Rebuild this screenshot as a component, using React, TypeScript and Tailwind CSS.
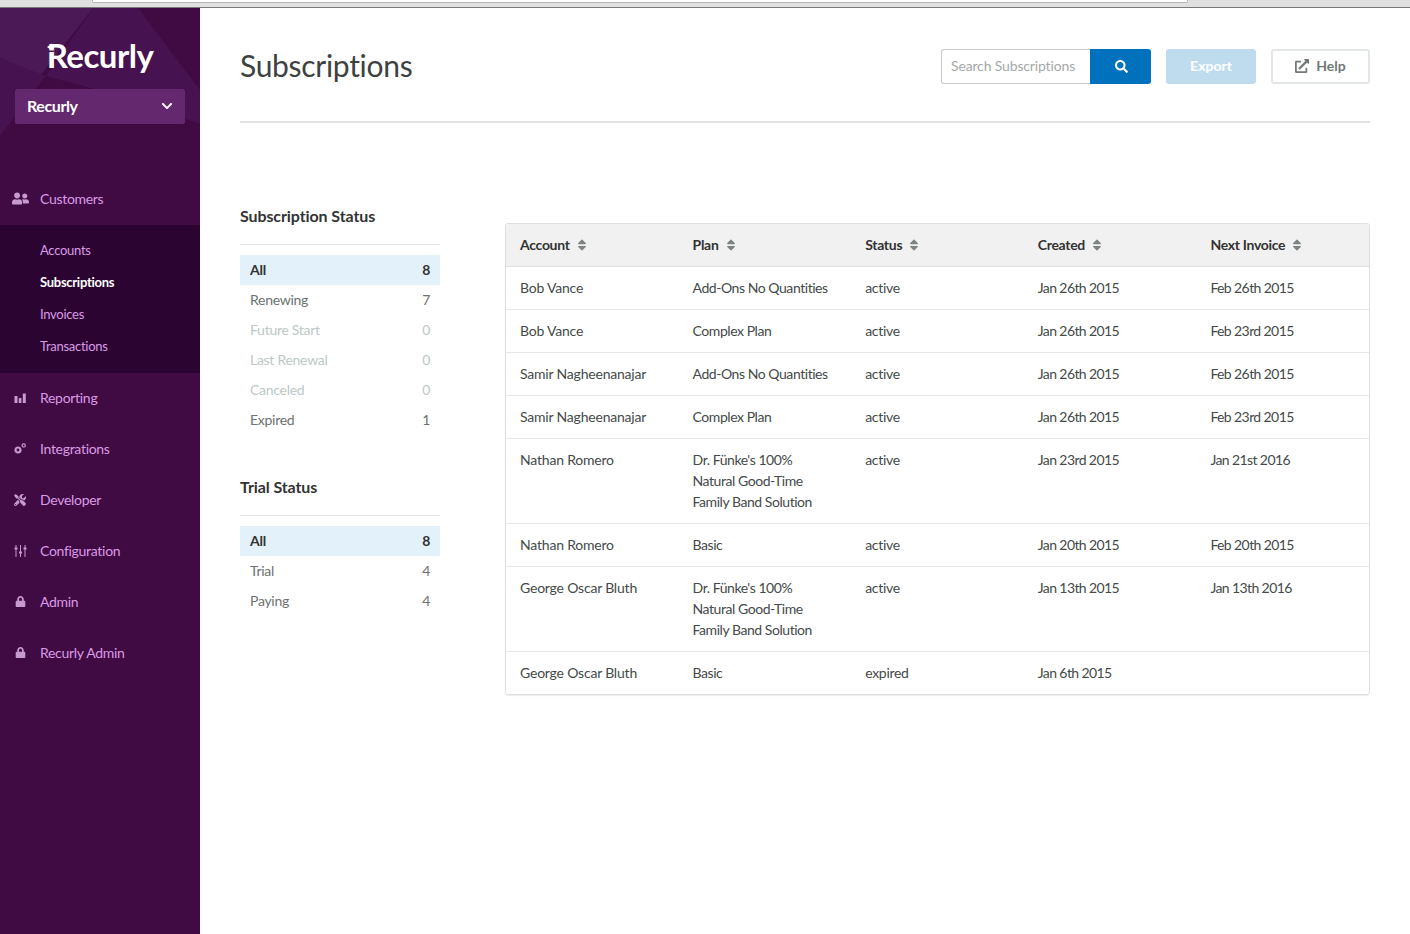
import { FaChevronDown, FaExternalLinkAlt, FaLock, FaSearch, FaSort, FaTools, FaUserFriends } from 'react-icons/fa';

const BarsIcon = () => (
  <svg width="12" height="10" viewBox="0 0 12 10" fill="currentColor">
    <rect x="0.5" y="3" width="3" height="7" />
    <rect x="4.8" y="5" width="2.6" height="5" />
    <rect x="8.8" y="0.5" width="3" height="9.5" />
  </svg>
);

const GearsIcon = () => (
  <svg width="12" height="11" viewBox="0 0 12 11" fill="none" stroke="currentColor">
    <circle cx="4" cy="7" r="2.5" strokeWidth="2.2" />
    <circle cx="9.7" cy="2.4" r="1.6" strokeWidth="1.2" />
  </svg>
);

const SlidersIcon = () => (
  <svg width="13" height="12" viewBox="0 0 13 12" fill="currentColor">
    <rect x="1.5" y="0" width="1" height="12" />
    <rect x="0.5" y="2.5" width="3" height="2" />
    <rect x="6" y="0" width="1" height="12" />
    <rect x="5" y="6.5" width="3" height="2" />
    <rect x="10.5" y="0" width="1" height="12" />
    <rect x="9.5" y="2.5" width="3" height="2" />
  </svg>
);

const navTop = { label: 'Customers', icon: <FaUserFriends size={17} /> };

const subNav = ['Accounts', 'Subscriptions', 'Invoices', 'Transactions'];

const navItems = [
  { label: 'Reporting', icon: <BarsIcon /> },
  { label: 'Integrations', icon: <GearsIcon /> },
  { label: 'Developer', icon: <FaTools size={12} /> },
  { label: 'Configuration', icon: <SlidersIcon /> },
  { label: 'Admin', icon: <FaLock size={11} /> },
  { label: 'Recurly Admin', icon: <FaLock size={11} /> },
];

const subscriptionStatus = [
  { label: 'All', count: 8, kind: 'active' },
  { label: 'Renewing', count: 7, kind: 'normal' },
  { label: 'Future Start', count: 0, kind: 'empty' },
  { label: 'Last Renewal', count: 0, kind: 'empty' },
  { label: 'Canceled', count: 0, kind: 'empty' },
  { label: 'Expired', count: 1, kind: 'normal' },
];

const trialStatus = [
  { label: 'All', count: 8, kind: 'active' },
  { label: 'Trial', count: 4, kind: 'normal' },
  { label: 'Paying', count: 4, kind: 'normal' },
];

const goodTime = ["Dr. Fünke's 100%", 'Natural Good-Time', 'Family Band Solution'];

const rows = [
  { account: 'Bob Vance', plan: ['Add-Ons No Quantities'], status: 'active', created: 'Jan 26th 2015', next: 'Feb 26th 2015' },
  { account: 'Bob Vance', plan: ['Complex Plan'], status: 'active', created: 'Jan 26th 2015', next: 'Feb 23rd 2015' },
  { account: 'Samir Nagheenanajar', plan: ['Add-Ons No Quantities'], status: 'active', created: 'Jan 26th 2015', next: 'Feb 26th 2015' },
  { account: 'Samir Nagheenanajar', plan: ['Complex Plan'], status: 'active', created: 'Jan 26th 2015', next: 'Feb 23rd 2015' },
  { account: 'Nathan Romero', plan: goodTime, status: 'active', created: 'Jan 23rd 2015', next: 'Jan 21st 2016' },
  { account: 'Nathan Romero', plan: ['Basic'], status: 'active', created: 'Jan 20th 2015', next: 'Feb 20th 2015' },
  { account: 'George Oscar Bluth', plan: goodTime, status: 'active', created: 'Jan 13th 2015', next: 'Jan 13th 2016' },
  { account: 'George Oscar Bluth', plan: ['Basic'], status: 'expired', created: 'Jan 6th 2015', next: '' },
];

const columns = ['Account', 'Plan', 'Status', 'Created', 'Next Invoice'];

function NavRow({ label, icon }: { label: string; icon: React.ReactNode }) {
  return (
    <div className="flex items-center h-[51px] pb-[2px] text-[#d99be6] text-[14px] tracking-[-0.3px]">
      <span className="w-10 flex justify-center text-[#c69ad0]">{icon}</span>
      <span>{label}</span>
    </div>
  );
}

function FilterList({ title, items }: { title: string; items: typeof trialStatus }) {
  return (
    <div>
      <h2 className="h-[38px] text-[16px] leading-[20px] font-bold text-[#333] tracking-[-0.1px]">{title}</h2>
      <div className="border-t border-[#e3e3e3] pt-[10px]">
        {items.map((item) => (
          <div
            key={item.label}
            className={`flex justify-between items-center h-[30px] px-[10px] pb-[2px] text-[14px] tracking-[-0.28px] ${
              item.kind === 'active'
                ? 'bg-[#e2f1fa] text-[#333] font-bold'
                : item.kind === 'empty'
                  ? 'text-[#bcc8c6]'
                  : 'text-[#6b7270]'
            }`}
          >
            <span>{item.label}</span>
            <span>{item.count}</span>
          </div>
        ))}
      </div>
    </div>
  );
}

export default function App() {
  return (
    <div className="h-[934px] flex flex-col overflow-hidden bg-white font-['Lato',sans-serif]">
      <div className="h-[8px] shrink-0 bg-[#e0e0e0] border-b border-[#77787a]">
        <div className="h-[3px] ml-[92px] w-[1096px] bg-white border border-t-0 border-[#b5b5b5] rounded-b-[2px]" />
      </div>

      <div className="flex flex-1 min-h-0">
        <aside className="w-[200px] shrink-0 bg-[#400a42] flex flex-col">
          <div className="relative h-[166px] px-[15px] overflow-hidden">
            <svg className="absolute inset-0" width="200" height="166" viewBox="0 0 200 166">
              <polygon points="0,0 93,0 40,68 0,50" fill="#4b1a56" />
              <polygon points="93,0 138,0 200,82 200,116 120,88 46,68" fill="#46124f" />
              <polygon points="0,50 46,68 0,128" fill="#46124f" />
            </svg>
            <div className="relative text-center text-white text-[33px] leading-[46px] font-bold tracking-[-0.5px] pt-[24px] h-[81px]">Recurly</div>
            {/* little arrow on the R of the logo */}
            <svg className="absolute left-[44px] top-[35px]" width="12" height="12" viewBox="0 0 12 12">
              <rect x="3" y="7.5" width="7" height="1.5" fill="#46124f" />
              <polygon points="3,4 8,0.5 8,7.5" fill="white" />
            </svg>
            <div className="relative flex items-center justify-between h-[35px] px-[12px] pb-[2px] rounded-[2px] bg-[#64286f] text-white text-[16px] font-bold tracking-[-0.4px]">
              <span>Recurly</span>
              <FaChevronDown size={12} />
            </div>
          </div>

          <NavRow {...navTop} />

          <div className="bg-[#2c0431] py-[10px] flex flex-col text-[13px] tracking-[-0.28px] text-[#d99be6]">
            {subNav.map((item) => (
              <div
                key={item}
                className={`h-[32px] pl-[40px] flex items-center ${item === 'Subscriptions' ? 'text-white font-bold' : ''}`}
              >
                {item}
              </div>
            ))}
          </div>

          {navItems.map((item) => (
            <NavRow key={item.label} {...item} />
          ))}
        </aside>

        <main className="flex-1 min-w-0 px-[40px]">
          <header className="flex items-center justify-between h-[115px] pt-[4px] border-b-2 border-[#e2e2e2]">
            <h1 className="mb-[2px] text-[30px] text-[#3d4241] tracking-[-0.3px]">Subscriptions</h1>
            <div className="flex items-center">
              <div className="flex h-[35px] w-[210px]">
                <div className="w-[149px] flex items-center border border-r-0 border-[#c9c9c9] rounded-l-[3px] pl-[9px] pb-[2px] text-[14px] tracking-[-0.15px] text-[#a4a9a8]">
                  Search Subscriptions
                </div>
                <div className="flex-1 flex items-center justify-center pl-[2px] bg-[#0071bc] rounded-r-[3px] text-white">
                  <FaSearch size={13} />
                </div>
              </div>
              <button className="ml-[15px] w-[90px] h-[35px] pb-[2px] rounded-[3px] bg-[#bfdcef] text-white text-[14px] font-bold">Export</button>
              <button className="ml-[15px] w-[99px] h-[35px] pb-[2px] rounded-[3px] border-2 border-[#e2e6e5] text-[#717877] text-[14px] font-bold flex items-center justify-center gap-[7px]">
                <FaExternalLinkAlt size={14} />
                Help
              </button>
            </div>
          </header>

          <div className="flex justify-between pt-[83px]">
            <div className="w-[200px] flex flex-col gap-[42px]">
              <FilterList title="Subscription Status" items={subscriptionStatus} />
              <FilterList title="Trial Status" items={trialStatus} />
            </div>

            <div className="w-[865px] h-[472px] mt-[17px] border border-[#e0e0e0] rounded-[3px] shadow-[0_1px_1px_rgba(0,0,0,0.08)] overflow-hidden">
              <table className="w-full table-fixed text-[14px] leading-[21px] text-[#444a49]">
                <thead>
                  <tr className="h-[42px] bg-[#f1f1f1] border-b border-[#e0e0e0] text-[#333]">
                    {columns.map((c) => (
                      <th key={c} className="text-left font-bold px-[14px] py-0">
                        <span className="inline-flex items-center gap-[5px] tracking-[-0.3px]">
                          {c}
                          <FaSort size={14} className="text-[#7d8483]" />
                        </span>
                      </th>
                    ))}
                  </tr>
                </thead>
                <tbody>
                  {rows.map((row, i) => (
                    <tr key={i} className="border-b border-[#e6e6e6] last:border-b-0 align-top">
                      <td className="px-[14px] pt-[10px] pb-[11px] tracking-[-0.2px]">{row.account}</td>
                      <td className="px-[14px] pt-[10px] pb-[11px] tracking-[-0.45px]">
                        {row.plan.map((line) => (
                          <div key={line} className="whitespace-nowrap">{line}</div>
                        ))}
                      </td>
                      <td className="px-[14px] pt-[10px] pb-[11px] tracking-[-0.3px]">{row.status}</td>
                      <td className="px-[14px] pt-[10px] pb-[11px] tracking-[-0.6px]">{row.created}</td>
                      <td className="px-[14px] pt-[10px] pb-[11px] tracking-[-0.6px]">{row.next}</td>
                    </tr>
                  ))}
                </tbody>
              </table>
            </div>
          </div>
        </main>
      </div>
    </div>
  );
}
